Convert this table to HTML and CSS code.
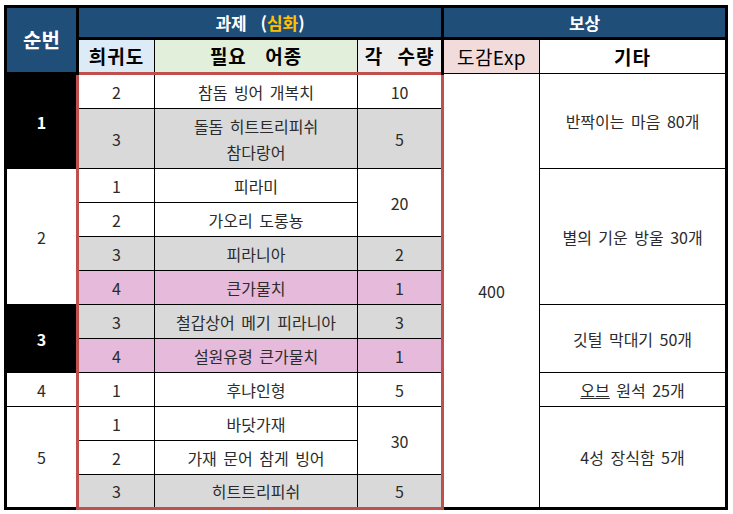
FILE: index.html
```html
<!DOCTYPE html>
<html lang="ko">
<head>
<meta charset="utf-8">
<title>과제 (심화)</title>
<link rel="stylesheet" href="styles.css">
</head>
<body>
<div class="sheet">
<table class="quest">
<colgroup>
<col class="c-seq"><col class="c-rar"><col class="c-fish"><col class="c-qty"><col class="c-exp"><col class="c-etc">
</colgroup>
<thead>
<tr class="h1">
<th rowspan="2" class="seq-h">순번</th>
<th colspan="3" class="task-h">과제 (<span class="gold">심화</span>)</th>
<th colspan="2" class="reward-h">보상</th>
</tr>
<tr class="h2">
<th class="rar-h">희귀도</th>
<th class="fish-h">필요 어종</th>
<th class="qty-h">각 수량</th>
<th class="exp-h">도감Exp</th>
<th class="etc-h">기타</th>
</tr>
</thead>
<tbody>
<tr class="first">
<td rowspan="2" class="seq dark">1</td>
<td class="rar">2</td><td class="fish">참돔 빙어 개복치</td><td class="qty">10</td>
<td rowspan="12" class="exp">400</td>
<td rowspan="2" class="etc">반짝이는 마음 80개</td>
</tr>
<tr class="tall gray">
<td class="rar">3</td><td class="fish two"><span class="line">돌돔 히트트리피쉬</span><span class="line">참다랑어</span></td><td class="qty">5</td>
</tr>
<tr>
<td rowspan="4" class="seq">2</td>
<td class="rar">1</td><td class="fish">피라미</td><td rowspan="2" class="qty">20</td>
<td rowspan="4" class="etc">별의 기운 방울 30개</td>
</tr>
<tr>
<td class="rar">2</td><td class="fish">가오리 도롱뇽</td>
</tr>
<tr class="gray">
<td class="rar">3</td><td class="fish">피라니아</td><td class="qty">2</td>
</tr>
<tr class="pink">
<td class="rar">4</td><td class="fish">큰가물치</td><td class="qty">1</td>
</tr>
<tr class="gray">
<td rowspan="2" class="seq dark">3</td>
<td class="rar">3</td><td class="fish">철갑상어 메기 피라니아</td><td class="qty">3</td>
<td rowspan="2" class="etc">깃털 막대기 50개</td>
</tr>
<tr class="pink">
<td class="rar">4</td><td class="fish">설원유령 큰가물치</td><td class="qty">1</td>
</tr>
<tr>
<td class="seq">4</td>
<td class="rar">1</td><td class="fish">후냐인형</td><td class="qty">5</td>
<td class="etc"><span class="ul">오브</span> 원석 25개</td>
</tr>
<tr>
<td rowspan="3" class="seq">5</td>
<td class="rar">1</td><td class="fish">바닷가재</td><td rowspan="2" class="qty">30</td>
<td rowspan="3" class="etc">4성 장식함 5개</td>
</tr>
<tr>
<td class="rar">2</td><td class="fish">가재 문어 참게 빙어</td>
</tr>
<tr class="gray last">
<td class="rar">3</td><td class="fish">히트트리피쉬</td><td class="qty">5</td>
</tr>
</tbody>
</table>
</div>
</body>
</html>
```
FILE: styles.css
```css
html, body {
  margin: 0;
  padding: 0;
  background: #ffffff;
}
body {
  font-family: "Noto Sans CJK KR", "Noto Sans", sans-serif;
  color: #2b2b2b;
}
.sheet {
  padding: 5px 0 0 4px;
}
.quest {
  border-collapse: collapse;
  table-layout: fixed;
  width: 721px;
  border: 3px solid #000;
}
.c-seq { width: 72px; }
.c-rar { width: 77px; }
.c-fish { width: 203px; }
.c-qty { width: 85px; }
.c-exp { width: 97px; }
.c-etc { width: 187px; }

.quest th, .quest td {
  border: 1px solid #000;
  padding: 0;
  text-align: center;
  vertical-align: middle;
  line-height: 20px;
}
.quest th {
  font-weight: 700;
  color: #000;
}
.h1 { height: 32px; }
.h2 { height: 35px; }
.h1 th {
  background: #1f4e79;
  color: #fff;
  font-size: 17px;
  border-bottom: 3px solid #000;
}
.task-h { word-spacing: 9px; }
.seq-h {
  font-size: 20px !important;
  border-right: 3px solid #000 !important;
  border-bottom: 3px solid #000;
}
.reward-h, .exp-h {
  border-left: 3px solid #000 !important;
}
.gold { color: #ffc000; }
.h2 th {
  font-size: 19px;
  letter-spacing: 1px;
  word-spacing: 8px;
}
.rar-h { background: #ddebf7; border-bottom: 1px solid #000 !important; }
.fish-h { background: #e2efda; border-bottom: 1px solid #000 !important; word-spacing: 12px !important; }
.qty-h { background: #ededed; border-bottom: 1px solid #000 !important; }
.exp-h { background: #f2dcdb; border-bottom: 3px solid #000; font-weight: 400 !important; letter-spacing: 0.5px !important; }
.etc-h { background: #fff; border-bottom: 3px solid #000; }

.quest td {
  font-size: 16px;
  word-spacing: 2px;
}
tbody tr { height: 34px; }
tbody tr.first { height: 35px; }
tbody tr.tall { height: 60px; }

.seq { background: #fff; }
.seq.dark {
  background: #000;
  color: #fff;
  font-weight: 700;
}
.rar { border-left: 3px solid #c0504d !important; }
.qty { border-right: 3px solid #c0504d !important; }
.first .rar, .first .fish, .first .qty { border-top: 3px solid #c0504d; }
.last .rar, .last .fish, .last .qty { border-bottom: 3px solid #c0504d; }
.gray .rar, .gray .fish, .gray .qty { background: #d9d9d9; }
.pink .rar, .pink .fish, .pink .qty { background: #e5bada; }
.quest td.two { line-height: 26px; }
.line { display: block; }
.exp, .etc { background: #fff; }
.ul { text-decoration: underline; }
```
